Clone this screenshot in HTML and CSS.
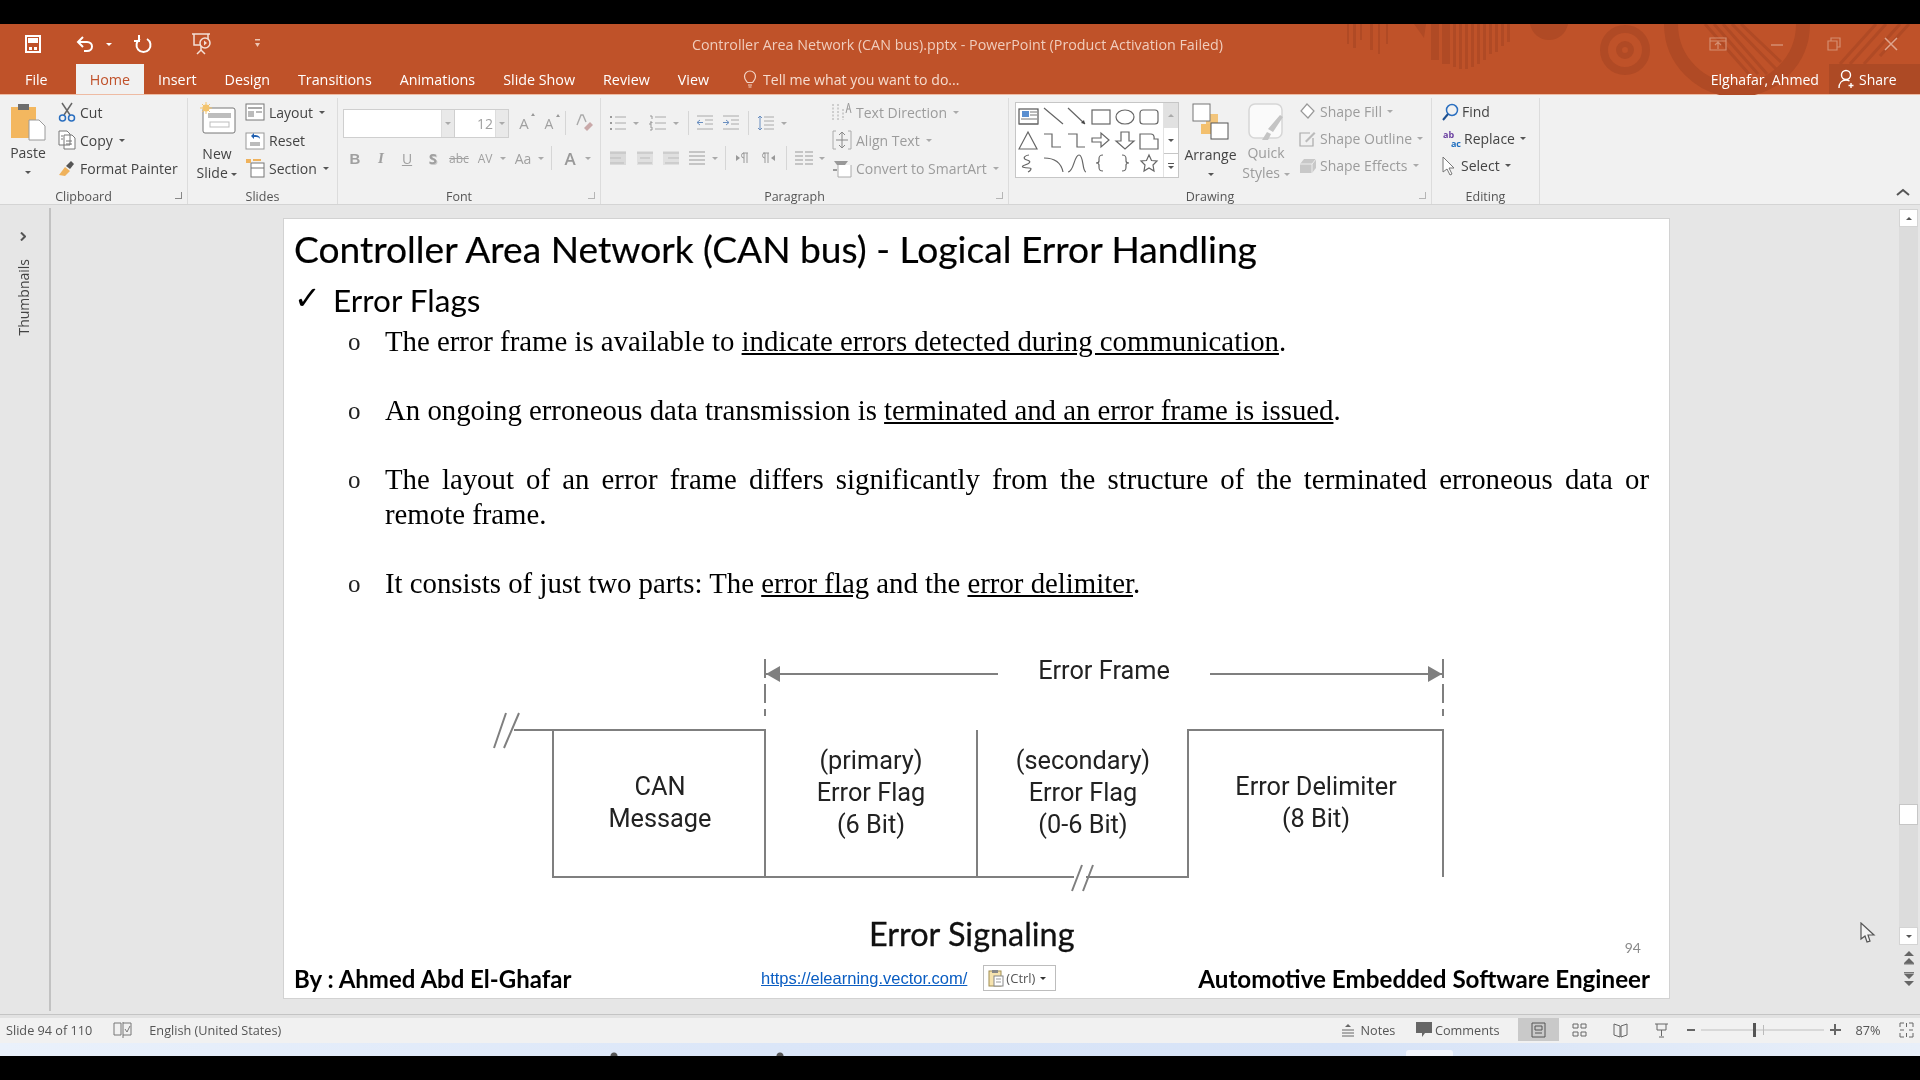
FILE: index.html
```html
<!DOCTYPE html>
<html lang="en">
<head>
    <meta charset="UTF-8">
    <title>Controller Area Network (CAN bus).pptx - PowerPoint</title>
    <link rel="stylesheet" href="styles.css">
</head>
<body>
<div class="screen">
    <div class="black-top"></div>

    <header class="header">
        <!-- office theme pattern behind the title bar -->
        <svg class="pattern" width="600" height="71" viewBox="0 0 600 71">
            <g fill="#b04a25">
                <rect x="27" y="0" width="2" height="20"/><rect x="33" y="0" width="3" height="24"/><rect x="40" y="0" width="2" height="16"/><rect x="50" y="0" width="3" height="26"/><rect x="58" y="0" width="2" height="30"/><rect x="66" y="0" width="2" height="20"/>
                <path d="M94 0h12l-2 14z"/>
                <rect x="111" y="0" width="8" height="36"/><rect x="122" y="0" width="8" height="40"/><rect x="133" y="0" width="3" height="43"/><rect x="139" y="0" width="3" height="45"/><rect x="145" y="0" width="3" height="45"/><rect x="151" y="0" width="3" height="43"/><rect x="157" y="0" width="3" height="40"/><rect x="163" y="0" width="3" height="36"/><rect x="169" y="0" width="3" height="30"/><rect x="175" y="0" width="3" height="28"/><rect x="181" y="0" width="3" height="22"/><rect x="187" y="0" width="3" height="18"/>
                <path d="M210 0h38c-2 10-10 16-19 16S212 10 210 0z"/>
            </g>
            <g fill="none" stroke="#b04a25">
                <circle cx="305" cy="26" r="21" stroke-width="8"/>
                <circle cx="305" cy="26" r="6" stroke-width="6"/>
                <circle cx="417" cy="0" r="66" stroke-width="14"/>
            </g>
            <g stroke="#b04a25" stroke-width="3">
                <path d="M385 0l44 50M394 0l44 50M403 0l44 50M412 0l44 45M421 0l40 38"/>
                <path d="M520 40L556 0M530 40L566 0M544 40L580 0M560 32L589 0"/>
            </g>
        </svg>

        <div class="titlebar">
            <div class="qat">
                <svg class="qat-save" width="18" height="18" viewBox="0 0 18 18"><path d="M2 1h14v16H2z" fill="none" stroke="#fff" stroke-width="2"/><rect x="4" y="3" width="10" height="5" fill="#fff"/><rect x="5" y="12" width="3" height="3" fill="#fff"/><rect x="10" y="12" width="3" height="3" fill="#fff"/></svg>
                <svg class="qat-undo" width="20" height="20" viewBox="0 0 20 20"><path d="M8 3L3 8l5 5M3 8h9c3 0 5 2 5 4.5s-2 4.5-5 4.5H9" fill="none" stroke="#fff" stroke-width="2"/></svg>
                <i class="caret caret-white qat-caret"></i>
                <svg class="qat-redo" width="20" height="20" viewBox="0 0 20 20"><path d="M7 5a7 7 0 1 0 7 0M6 1v6H1" fill="none" stroke="#fff" stroke-width="2"/></svg>
                <svg class="qat-show" width="22" height="24" viewBox="0 0 22 24"><path d="M1 2h18M3 2v11h14V2M10 13v5M6 22l4-4 4 4" fill="none" stroke="#f4e0d6" stroke-width="1.5"/><circle cx="14" cy="11" r="5" fill="#c0512a" stroke="#f4e0d6" stroke-width="1.5"/><path d="M13 8.5l3 2.500-3 2.500z" fill="#f4e0d6"/></svg>
                <svg class="qat-more" width="8" height="10" viewBox="0 0 8 10"><rect x="1" y="0" width="5" height="1.5" fill="#edc6b4"/><path d="M1 4h5L3.5 8z" fill="#edc6b4"/></svg>
            </div>
            <div class="doc-title">Controller Area Network (CAN bus).pptx - PowerPoint (Product Activation Failed)</div>
            <div class="win-btns">
                <svg width="18" height="16" viewBox="0 0 18 16"><path d="M1 2h16v12H1zM1 5h16M9 13V7M6 9l3-3 3 3" fill="none" stroke="#d58e70" stroke-width="1.2"/></svg>
                <svg width="14" height="16" viewBox="0 0 14 16"><path d="M1 9h12" stroke="#d58e70" stroke-width="1.5"/></svg>
                <svg width="14" height="14" viewBox="0 0 14 14"><path d="M1 4h9v9H1zM4 4V1h9v9h-3" fill="none" stroke="#d58e70" stroke-width="1.2"/></svg>
                <svg width="14" height="14" viewBox="0 0 14 14"><path d="M1 1l12 12M13 1L1 13" stroke="#e0a68e" stroke-width="1.5"/></svg>
            </div>
        </div>

        <nav class="tabs">
            <span class="tab tab-file">File</span>
            <span class="tab tab-active">Home</span>
            <span class="tab">Insert</span>
            <span class="tab">Design</span>
            <span class="tab">Transitions</span>
            <span class="tab">Animations</span>
            <span class="tab">Slide Show</span>
            <span class="tab">Review</span>
            <span class="tab">View</span>
            <span class="tell-me">
                <svg width="14" height="18" viewBox="0 0 14 18"><path d="M4.5 12.5C3 10.5 1.5 9.5 1.5 6.5a5.500 5.500 0 0 1 11 0c0 3-1.500 4-3 6zM5 15h4M5.500 17h3" fill="none" stroke="#f3d6c8" stroke-width="1.2"/></svg>
                Tell me what you want to do...
            </span>
            <span class="account">Elghafar, Ahmed</span>
            <span class="share">
                <svg width="18" height="20" viewBox="0 0 18 20"><circle cx="8" cy="6" r="4.5" fill="none" stroke="#fff" stroke-width="1.4"/><path d="M1 19c0-5 3-8 7-8 1.5 0 2.5.4 3.5 1M13 14v5M10.5 16.5h5" fill="none" stroke="#fff" stroke-width="1.4"/></svg>
                Share
            </span>
        </nav>
    </header>

    <section class="ribbon">
        <div class="group group-clipboard">
            <div class="group-body">
                <div class="big-btn big-paste">
                    <svg width="36" height="38" viewBox="0 0 36 38"><rect x="1" y="4" width="25" height="31" fill="#f3b75f"/><rect x="8" y="1" width="11" height="6" fill="#6d6d6d"/><path d="M19 17h10l6 6v14H19z" fill="#fff" stroke="#9a9a9a"/></svg>
                    <span class="big-label">Paste</span>
                    <i class="caret"></i>
                </div>
                <div class="stack">
                    <div class="row">
                        <svg width="18" height="20" viewBox="0 0 18 20"><path d="M4 1l8 12M14 1L6 13" stroke="#666" stroke-width="1.5"/><circle cx="4.5" cy="16" r="3" fill="none" stroke="#2a6fc0" stroke-width="1.5"/><circle cx="13.5" cy="16" r="3" fill="none" stroke="#2a6fc0" stroke-width="1.5"/></svg>
                        <span>Cut</span>
                    </div>
                    <div class="row">
                        <svg width="18" height="20" viewBox="0 0 18 20"><path d="M1 1h8l3 3v11H1zM6 5h8l3 3v11H6z" fill="#fff" stroke="#777"/><path d="M3 6h2M3 9h2M8 11h6M8 14h6" stroke="#777"/></svg>
                        <span>Copy</span><i class="caret caret-copy"></i>
                    </div>
                    <div class="row">
                        <svg width="18" height="20" viewBox="0 0 18 20"><path d="M1 17l6-8 5 4-5 5z" fill="#efb25c"/><path d="M8 8l5-5 3 3-4 5z" fill="#555"/></svg>
                        <span>Format Painter</span>
                    </div>
                </div>
            </div>
            <div class="group-label">Clipboard</div>
            <i class="launcher"></i>
        </div>

        <div class="group group-slides">
            <div class="group-body">
                <div class="big-btn big-new">
                    <svg width="36" height="32" viewBox="0 0 36 32"><rect x="3" y="6" width="32" height="25" rx="2" fill="#fff" stroke="#777"/><rect x="8" y="11" width="23" height="5" fill="#bdbdbd"/><rect x="10" y="20" width="19" height="5" fill="none" stroke="#bdbdbd"/><circle cx="6" cy="6" r="3.5" fill="#f3c46e"/><path d="M6 0v12M0 6h12M2 2l8 8M10 2l-8 8" stroke="#f3c46e"/></svg>
                    <span class="big-label big-new-text">New</span>
                    <span class="big-label big-new-second">Slide <i class="caret"></i></span>
                </div>
                <div class="stack stack-slides">
                    <div class="row">
                        <svg width="20" height="20" viewBox="0 0 20 20"><rect x="1" y="2" width="18" height="16" fill="#fff" stroke="#777"/><path d="M3 5h14v2H3z" fill="#aaa"/><path d="M3 9h6v6H3zM11 9h6v2h-6z" fill="#bbb"/></svg>
                        <span>Layout</span><i class="caret"></i>
                    </div>
                    <div class="row">
                        <svg width="20" height="20" viewBox="0 0 20 20"><rect x="1" y="3" width="18" height="16" fill="#fff" stroke="#999"/><path d="M5 12h10v4H5z" fill="#bbb"/><path d="M6 6l3-3v2c4 0 6 1 6 4-1-2-3-2-6-2v2z" fill="#1f5fb0"/></svg>
                        <span>Reset</span>
                    </div>
                    <div class="row">
                        <svg width="20" height="20" viewBox="0 0 20 20"><rect x="6" y="5" width="13" height="14" fill="#fff" stroke="#777"/><path d="M6 10h13" stroke="#777"/><rect x="1" y="1" width="5" height="4" fill="#efb25c"/><rect x="8" y="1" width="8" height="2" fill="#efb25c"/></svg>
                        <span>Section</span><i class="caret"></i>
                    </div>
                </div>
            </div>
            <div class="group-label">Slides</div>
        </div>

        <div class="group group-font">
            <div class="group-body tool-rows">
                <div class="tool-row tool-row-top">
                    <div class="combo combo-font"><i class="combo-arrow"><i class="caret caret-light"></i></i></div>
                    <div class="combo combo-size"><span class="combo-val">12</span><i class="combo-arrow"><i class="caret caret-light"></i></i></div>
                    <span class="tool tool-grow">A<i class="tiny-up"></i></span>
                    <span class="tool tool-shrink">A<i class="tiny-up"></i></span>
                    <i class="sep sep-a"></i>
                    <span class="tool">
                        <svg width="18" height="18" viewBox="0 0 18 18"><path d="M1 11L5 1h2l3 7" fill="none" stroke="#aaa" stroke-width="1.4"/><path d="M8 14l6-6 3 3-6 6z" fill="#c9a9a9"/></svg>
                    </span>
                </div>
                <div class="tool-row">
                    <span class="tool tool-b">B</span>
                    <span class="tool tool-i">I</span>
                    <span class="tool tool-u">U</span>
                    <span class="tool tool-s">S</span>
                    <span class="tool tool-abc">abc</span>
                    <span class="tool tool-av">AV</span><i class="caret caret-light caret-slot"></i>
                    <span class="tool tool-aa">Aa</span><i class="caret caret-light caret-slot"></i>
                    <i class="sep sep-b"></i>
                    <span class="tool tool-color">A</span><i class="caret caret-light caret-slot"></i>
                </div>
            </div>
            <div class="group-label">Font</div>
            <i class="launcher launcher-light"></i>
        </div>

        <div class="group group-para">
            <div class="group-body">
                <div class="tool-rows para-tools">
                    <div class="tool-row tool-row-top">
                        <span class="tool"><svg width="18" height="16" viewBox="0 0 18 16"><path d="M1 2h2M1 8h2M1 14h2" stroke="#999" stroke-width="2"/><path d="M6 2h11M6 8h11M6 14h11" stroke="#aaa"/></svg></span><i class="caret caret-light caret-slot"></i>
                        <span class="tool tool-gap"><svg width="18" height="16" viewBox="0 0 18 16"><path d="M1 1h2v3M1 7h2v1H1v2h2M1 12h2v3H1" fill="none" stroke="#999"/><path d="M6 2h11M6 8h11M6 14h11" stroke="#aaa"/></svg></span><i class="caret caret-light caret-slot"></i>
                        <i class="sep sep-c"></i>
                        <span class="tool"><svg width="18" height="16" viewBox="0 0 18 16"><path d="M1 1h16M9 5h8M9 9h8M1 14h16" stroke="#aaa"/><path d="M7 7.5H1M4 5L1 7.5 4 10" fill="none" stroke="#6a8fc0"/></svg></span>
                        <span class="tool"><svg width="18" height="16" viewBox="0 0 18 16"><path d="M1 1h16M9 5h8M9 9h8M1 14h16" stroke="#aaa"/><path d="M1 7.5h6M4 5l3 2.500L4 10" fill="none" stroke="#6a8fc0"/></svg></span>
                        <i class="sep sep-d"></i>
                        <span class="tool"><svg width="18" height="18" viewBox="0 0 18 18"><path d="M3 2v14M1 4l2-2 2 2M1 14l2 2 2-2" fill="none" stroke="#6a8fc0"/><path d="M7 3h10M7 7h10M7 11h10M7 15h10" stroke="#aaa"/></svg></span><i class="caret caret-light caret-slot"></i>
                    </div>
                    <div class="tool-row">
                        <span class="tool"><svg width="16" height="14" viewBox="0 0 16 14"><rect width="16" height="14" fill="#dadada"/><path d="M0 2h16M0 7h11M0 12h14" stroke="#bbb"/></svg></span>
                        <span class="tool tool-tight1"><svg width="16" height="14" viewBox="0 0 16 14"><rect width="16" height="14" fill="#e0e0e0"/><path d="M0 2h16M3 7h10M1 12h14" stroke="#bbb"/></svg></span>
                        <span class="tool"><svg width="16" height="14" viewBox="0 0 16 14"><rect width="16" height="14" fill="#e0e0e0"/><path d="M0 2h16M5 7h11M2 12h14" stroke="#bbb"/></svg></span>
                        <span class="tool"><svg width="16" height="14" viewBox="0 0 16 14"><path d="M0 1h16M0 5h16M0 9h16M0 13h16" stroke="#999"/></svg></span><i class="caret caret-light caret-slot"></i>
                        <i class="sep sep-e"></i>
                        <span class="tool"><svg width="14" height="12" viewBox="0 0 14 12"><path d="M1 3l4 3-4 3z" fill="#999"/><path d="M8 1h5M9 1v10M12 1v10M9 6a2.5 2.5 0 0 1 0-5" fill="none" stroke="#999"/></svg></span>
                        <span class="tool tool-tight1"><svg width="14" height="12" viewBox="0 0 14 12"><path d="M13 3L9 6l4 3z" fill="#999"/><path d="M1 1h6M3 1v10M6 1v10M3 6a2.5 2.5 0 0 1 0-5" fill="none" stroke="#999"/></svg></span>
                        <i class="sep sep-f"></i>
                        <span class="tool"><svg width="18" height="14" viewBox="0 0 18 14"><path d="M0 1h8M0 5h8M0 9h8M0 13h8M10 1h8M10 5h8M10 9h8M10 13h8" stroke="#999"/></svg></span><i class="caret caret-light caret-slot"></i>
                    </div>
                </div>
                <div class="stack stack-dim stack-para">
                    <div class="row">
                        <svg width="20" height="22" viewBox="0 0 20 22"><path d="M1 3v16M6 3v16M11 8v11" stroke="#aaa" stroke-dasharray="2 1.5"/><path d="M14 12l2.5-10L19 12M15 8h3" fill="none" stroke="#999"/></svg>
                        <span>Text Direction</span><i class="caret caret-light"></i>
                    </div>
                    <div class="row">
                        <svg width="20" height="20" viewBox="0 0 20 20"><path d="M4 1H1v18h3M16 1h3v18h-3" fill="none" stroke="#aaa"/><path d="M10 2v16M7 5l3-3 3 3M7 15l3 3 3-3M4 10h12" fill="none" stroke="#888"/></svg>
                        <span>Align Text</span><i class="caret caret-light"></i>
                    </div>
                    <div class="row">
                        <svg width="20" height="20" viewBox="0 0 20 20"><path d="M2 3h14l-3 4H5z" fill="#999"/><path d="M6 7v12h13V7" fill="#fff" stroke="#aaa"/><path d="M1 12h4" stroke="#999" stroke-width="2"/></svg>
                        <span>Convert to SmartArt</span><i class="caret caret-light"></i>
                    </div>
                </div>
            </div>
            <div class="group-label">Paragraph</div>
            <i class="launcher launcher-light"></i>
        </div>

        <div class="group group-draw">
            <div class="group-body">
                <div class="gallery">
                    <svg width="147" height="74" viewBox="0 0 147 74">
                        <g fill="none" stroke="#666" stroke-width="1.2">
                            <rect x="3" y="6" width="19" height="15" stroke="#555"/>
                            <path d="M28 5l19 16M52 5l17 16"/>
                            <rect x="76" y="7" width="18" height="14"/>
                            <ellipse cx="109" cy="14" rx="9" ry="7"/>
                            <rect x="124" y="7" width="18" height="14" rx="3"/>
                            <path d="M3 46l9-17 9 17z"/>
                            <path d="M28 31h8v13h9M52 31h9v13h8"/>
                            <path d="M76 35h9v-5l8 7-8 7v-5h-9z"/>
                            <path d="M105 29h8v9h5l-9 8-9-8h5z"/>
                            <path d="M124 31h11c4 0 3 5 3 5h4v10h-18z"/>
                            <path d="M13 52c-6 1-6 4-2 5s4 3-2 5 0 3 4 3 1 3-1 4"/>
                            <path d="M28 55c10 0 17 4 19 14"/>
                            <path d="M52 69c6 0 6-17 11-17s3 17 7 17"/>
                            <path d="M87 52c-4 0-4 2-4 4v2c0 2-3 2-3 2s3 0 3 2v2c0 2 0 4 4 4M106 52c4 0 4 2 4 4v2c0 2 3 2 3 2s-3 0-3 2v2c0 2 0 4-4 4"/>
                            <path d="M133 52l2.5 5.500 5.500.5-4 4 1 6-5-3-5 3 1-6-4-4 5.500-.5z"/>
                        </g>
                        <rect x="6" y="8" width="7" height="6" fill="#5b8fd0"/>
                        <path d="M14 9h7M14 12h7M5 16h16M3 21h19" stroke="#777"/>
                        <path d="M69 21l-4-1 3-3z" fill="#444"/>
                    </svg>
                    <div class="gallery-scroll">
                        <div class="gs-up"><i class="caret caret-light caret-flip"></i></div>
                        <div class="gs-down"><i class="caret"></i></div>
                        <div class="gs-more"><i class="gs-more-line"></i><i class="caret"></i></div>
                    </div>
                </div>
                <div class="big-btn big-arrange">
                    <svg width="38" height="37" viewBox="0 0 38 37"><rect x="14" y="11" width="12" height="12" fill="#f3c06e" opacity=".9"/><rect x="9" y="21" width="10" height="10" fill="#f3c06e"/><rect x="1" y="1" width="17" height="17" fill="#fff" stroke="#777"/><rect x="19" y="20" width="17" height="16" fill="#fff" stroke="#555"/></svg>
                    <span class="big-label">Arrange</span>
                    <i class="caret"></i>
                </div>
                <div class="big-btn big-quick">
                    <svg width="36" height="38" viewBox="0 0 36 38"><rect x="1" y="1" width="33" height="34" rx="6" fill="#fafafa" stroke="#d6d6d6" stroke-width="1.5"/><path d="M14 37l5-8 4 2-3 6zM20 26l12-14 3 2-10 15z" fill="#c4c4c4"/></svg>
                    <span class="big-label dim">Quick</span>
                    <span class="big-label dim">Styles <i class="caret caret-light"></i></span>
                </div>
                <div class="stack stack-dim stack-shape">
                    <div class="row row-shape">
                        <svg width="18" height="18" viewBox="0 0 18 18"><path d="M8 1l7 7-6 7-7-7z" fill="#fff" stroke="#999" stroke-width="1.2"/></svg>
                        <span>Shape Fill</span><i class="caret caret-light"></i>
                    </div>
                    <div class="row row-shape">
                        <svg width="18" height="18" viewBox="0 0 18 18"><path d="M11 3H1v13h13V8" fill="none" stroke="#aaa" stroke-width="1.2"/><path d="M6 11l9-9 1.5 1.5-9 9z" fill="#bbb"/></svg>
                        <span>Shape Outline</span><i class="caret caret-light"></i>
                    </div>
                    <div class="row row-shape">
                        <svg width="18" height="18" viewBox="0 0 18 18"><path d="M5 2h12v9l-4 5H1V7z" fill="#c8c8c8"/><path d="M1 7h12v9M13 7l4-5" fill="none" stroke="#eee"/></svg>
                        <span>Shape Effects</span><i class="caret caret-light"></i>
                    </div>
                </div>
            </div>
            <div class="group-label">Drawing</div>
            <i class="launcher launcher-light"></i>
        </div>

        <div class="group group-edit">
            <div class="group-body">
                <div class="stack stack-edit">
                    <div class="row row-shape">
                        <svg width="18" height="18" viewBox="0 0 18 18"><circle cx="11" cy="7" r="5.5" fill="none" stroke="#2a6fc0" stroke-width="1.5"/><path d="M7 11l-5 6" stroke="#1c4f90" stroke-width="2"/></svg>
                        <span>Find</span>
                    </div>
                    <div class="row row-shape">
                        <span class="ic-replace"><b class="ic-ab">ab</b><b class="ic-ac">ac</b></span>
                        <span>Replace</span><i class="caret caret-replace"></i>
                    </div>
                    <div class="row row-shape">
                        <svg width="14" height="20" viewBox="0 0 14 20"><path d="M2 1v15l4-3 3 6 2-1-3-6h5z" fill="#fff" stroke="#777"/></svg>
                        <span class="select-text">Select</span><i class="caret"></i>
                    </div>
                </div>
            </div>
            <div class="group-label">Editing</div>
        </div>

        <svg class="collapse" width="14" height="8" viewBox="0 0 14 8"><path d="M1 7l6-5 6 5" fill="none" stroke="#555" stroke-width="2"/></svg>
    </section>

    <main class="work">
        <aside class="thumbs">
            <svg width="6" height="9" viewBox="0 0 6 9"><path d="M1 0.5l4 4-4 4" fill="none" stroke="#555" stroke-width="2"/></svg>
            <span class="thumbs-label">Thumbnails</span>
        </aside>

        <div class="stage">
            <article class="slide">
                <h1 class="slide-title">Controller Area Network (CAN bus) - Logical Error Handling</h1>
                <h2 class="slide-sub"><span class="tick">&#10003;</span>Error Flags</h2>
                <ul class="points">
                    <li>The error frame is available to <u>indicate errors detected during communication</u>.</li>
                    <li>An ongoing erroneous data transmission is <u>terminated and an error frame is issued</u>.</li>
                    <li class="justified">The layout of an error frame differs significantly from the structure of the terminated erroneous data or remote frame.</li>
                    <li>It consists of just two parts: The <u>error flag</u> and the <u>error delimiter</u>.</li>
                </ul>

                <svg class="diagram" width="1385" height="272" viewBox="0 0 1385 272">
                    <g fill="none" stroke="#7f7f7f" stroke-width="2">
                        <path d="M230 89H481V236M269 89V236H904V89H1159V236M693 89V236"/>
                        <path d="M210 107l12-35M220 107l15-35"/>
                        <path d="M481 18V75M1159 18V75" stroke-dasharray="19 6"/>
                        <path d="M481 33H714M926 33H1159"/>
                    </g>
                    <rect x="790" y="230" width="12" height="12" fill="#fff"/>
                    <path d="M788 250l10-26M799 250l10-26" fill="none" stroke="#7f7f7f" stroke-width="2"/>
                    <path d="M482 33l14-8v16zM1158 33l-14-8v16z" fill="#7f7f7f"/>
                    <g class="diagram-text">
                        <text x="820" y="38">Error Frame</text>
                        <text x="376" y="153.5">CAN</text>
                        <text x="376" y="185.5">Message</text>
                        <text x="587" y="127.5">(primary)</text>
                        <text x="587" y="159.5">Error Flag</text>
                        <text x="587" y="191.5">(6 Bit)</text>
                        <text x="799" y="127.5">(secondary)</text>
                        <text x="799" y="159.5">Error Flag</text>
                        <text x="799" y="191.5">(0-6 Bit)</text>
                        <text x="1032" y="153.5">Error Delimiter</text>
                        <text x="1032" y="185.5">(8 Bit)</text>
                    </g>
                </svg>

                <div class="caption-row">
                    <span class="caption">Error Signaling</span>
                    <span class="page-num">94</span>
                </div>
                <footer class="slide-foot">
                    <b class="foot-by">By : Ahmed Abd El-Ghafar</b>
                    <a class="foot-link" href="#">https://elearning.vector.com/</a>
                    <span class="paste-opt">
                        <svg width="16" height="18" viewBox="0 0 16 18"><rect x="1" y="2" width="12" height="15" fill="#f6e3ae" stroke="#a08d50"/><rect x="4" y="1" width="6" height="3" fill="#888"/><rect x="6" y="7" width="9" height="10" fill="#fff" stroke="#888"/><path d="M8 10h5M8 13h5" stroke="#999"/></svg>
                        (Ctrl)<i class="caret caret-dark"></i>
                    </span>
                    <b class="foot-role">Automotive Embedded Software Engineer</b>
                </footer>
            </article>

            <svg class="cursor" width="16" height="22" viewBox="0 0 16 22"><path d="M1 1v16l4-3 2 6 3-1-2-6h6z" fill="#f2f2f2" stroke="#555" stroke-width="1.2"/></svg>
        </div>

        <div class="scrollbar">
            <div class="sb-btn"><i class="caret caret-flip"></i></div>
            <div class="sb-track">
                <div class="sb-thumb"></div>
            </div>
            <div class="sb-btn"><i class="caret"></i></div>
            <svg class="sb-page" width="10" height="14" viewBox="0 0 10 14"><path d="M5 0l5 5H0zM5 7l5 5H0z" fill="#666"/><rect x="0" y="12" width="10" height="1.5" fill="#777"/></svg>
            <svg class="sb-page" width="10" height="14" viewBox="0 0 10 14"><rect x="0" y="0" width="10" height="1.5" fill="#777"/><path d="M0 2h10L5 7zM0 9h10l-5 5z" fill="#666"/></svg>
        </div>
    </main>

    <footer class="status">
        <span class="st-slide">Slide 94 of 110</span>
        <svg class="st-proof" width="20" height="16" viewBox="0 0 20 16"><path d="M1 1h7v12H1zM10 1h8v12h-8" fill="none" stroke="#777"/><path d="M10 0v16M12 7l2 3 3-6" fill="none" stroke="#777"/></svg>
        <span class="st-lang">English (United States)</span>
        <div class="st-right">
            <svg width="14" height="14" viewBox="0 0 14 14"><path d="M7 1l3 3H4z" fill="#666"/><path d="M1 7h12M1 10h12M1 13h12" stroke="#666"/></svg>
            <span class="st-notes">Notes</span>
            <svg class="st-comment" width="17" height="16" viewBox="0 0 17 16"><path d="M0 0h16v11H9l-3 4v-4H0z" fill="#666"/></svg>
            <span class="st-comments">Comments</span>
            <span class="view view-active"><svg width="15" height="16" viewBox="0 0 15 16"><path d="M1 1h13v14H1zM4 4h7v4H4zM4 11h7" fill="none" stroke="#555"/></svg></span>
            <span class="view"><svg width="15" height="14" viewBox="0 0 15 14"><path d="M1 1h5v4H1zM9 1h5v4H9zM1 9h5v4H1zM9 9h5v4H9z" fill="none" stroke="#666"/></svg></span>
            <span class="view"><svg width="15" height="16" viewBox="0 0 15 16"><path d="M1 2l6 2v11l-6-2zM14 2L8 4v11l6-2z" fill="none" stroke="#666"/></svg></span>
            <span class="view"><svg width="15" height="16" viewBox="0 0 15 16"><path d="M1 2h13M3 2v6h9V2M7.5 8v6M5 15h5" fill="none" stroke="#666"/></svg></span>
            <span class="zoom-minus"></span>
            <span class="zoom-slider"><i class="zoom-mid"></i><i class="zoom-thumb"></i></span>
            <span class="zoom-plus"></span>
            <span class="zoom-val">87%</span>
            <svg class="st-fit" width="15" height="16" viewBox="0 0 15 16"><path d="M1 5V1h4M10 1h4v4M14 11v4h-4M5 15H1v-4M1 8h4M10 8h4M7.5 1v4M7.5 11v4" fill="none" stroke="#666"/></svg>
        </div>
    </footer>

    <div class="desktop-strip"><i class="strip-tab"></i></div>
    <div class="black-bottom"></div>
</div>
</body>
</html>
```

FILE: styles.css
```css
* {
    box-sizing: border-box;
}
body {
    margin: 0;
    background: #000;
    font-family: 'Open Sans', sans-serif;
    font-size: 14px;
    color: #444;
}
i {
    font-style: normal;
}
.screen {
    width: 1920px;
    height: 1080px;
    display: flex;
    flex-direction: column;
    overflow: hidden;
    filter: blur(0.35px);
}
.black-top {
    height: 24px;
    background: #000;
}
.black-bottom {
    height: 24px;
    background: #000;
}

/* title bar + tabs */
.header {
    position: relative;
    height: 71px;
    background: #bf5229;
    border-bottom: 1px solid #eebba3;
    color: #fff;
}
.pattern {
    position: absolute;
    right: 0;
    top: 0;
}
.titlebar {
    position: relative;
    height: 40px;
    display: grid;
    grid-template-columns: 1fr auto 1fr;
    align-items: center;
}
.qat {
    display: flex;
    align-items: center;
    padding-left: 24px;
}
.qat-undo {
    margin-left: 33px;
}
.qat-caret {
    margin-left: 11px;
}
.qat-redo {
    margin-left: 21px;
}
.qat-show {
    margin-left: 38px;
}
.qat-more {
    margin-left: 41px;
}
.doc-title {
    color: #f0cdbd;
    font-size: 14.3px;
    padding-right: 5px;
}
.win-btns {
    display: flex;
    align-items: center;
    justify-content: flex-end;
    gap: 43px;
    padding-right: 22px;
}
.tabs {
    position: relative;
    height: 30px;
    display: flex;
    align-items: stretch;
    font-size: 14.3px;
}
.tab {
    padding: 0 14px;
    display: flex;
    align-items: center;
}
.tab-file {
    margin-left: 11px;
    margin-right: 14px;
}
.tab-active {
    background: #f1f1f1;
    color: #c0512a;
}
.tell-me {
    margin-left: 20px;
    display: flex;
    align-items: center;
    gap: 6px;
    color: #f6dccf;
    font-size: 14.1px;
}
.account {
    margin-left: auto;
    display: flex;
    align-items: center;
    font-size: 14.1px;
    padding-right: 10px;
}
.share {
    width: 91px;
    background: #ad4a25;
    display: flex;
    align-items: center;
    gap: 3px;
    padding-left: 9px;
    font-size: 14px;
}

/* ribbon */
.ribbon {
    height: 110px;
    background: #f1f1f1;
    border-bottom: 1px solid #d4d4d4;
    display: flex;
    padding-top: 3px;
    white-space: nowrap;
}
.group {
    position: relative;
    display: flex;
    flex-direction: column;
    border-right: 1px solid #dcdcdc;
}
.group-clipboard { width: 188px; }
.group-slides { width: 150px; }
.group-font { width: 263px; }
.group-para { width: 408px; }
.group-draw { width: 423px; }
.group-edit { width: 108px; }
.group-body {
    height: 93px;
    display: flex;
}
.group-label {
    height: 14px;
    line-height: 14px;
    text-align: center;
    font-size: 12.5px;
    color: #555;
}
.group-clipboard .group-label,
.group-font .group-label,
.group-para .group-label,
.group-draw .group-label {
    padding-right: 20px;
}
.launcher {
    position: absolute;
    right: 5px;
    bottom: 5px;
    width: 7px;
    height: 7px;
    border-left: 1px solid #888;
    border-top: 1px solid #888;
    transform: rotate(180deg);
}
.launcher-light {
    border-color: #b5b5b5;
}
.caret {
    display: inline-block;
    width: 0;
    height: 0;
    border-left: 3px solid transparent;
    border-right: 3px solid transparent;
    border-top: 3px solid #555;
    vertical-align: middle;
}
.caret-white {
    border-top-color: #fff;
}
.caret-light {
    border-top-color: #aaa;
}
.caret-dark {
    border-top-color: #333;
    margin-left: 3px;
}
.caret-flip {
    transform: rotate(180deg);
}
.row .caret-copy {
    margin-left: 11px;
}
.row .caret-replace {
    margin-left: 9px;
}
.caret-slot {
    flex: none;
    margin: 0 2px;
}
.big-btn {
    display: flex;
    flex-direction: column;
    align-items: center;
}
.big-label {
    line-height: 20px;
}
.big-paste {
    width: 56px;
    padding-top: 5px;
}
.big-paste .big-label {
    margin-top: 2px;
}
.big-paste .caret {
    margin-top: 8px;
}
.big-new {
    width: 44px;
    margin-left: 7px;
    padding-top: 4px;
}
.big-new svg {
    margin-left: 2px;
}
.big-new-text {
    margin-top: 10px;
}
.big-new-second {
    margin-top: -1px;
}
.stack {
    display: flex;
    flex-direction: column;
    margin-left: 2px;
}
.stack-slides {
    margin-left: 6px;
}
.stack-dim {
    color: #9c9c9c;
}
.row {
    height: 28px;
    display: flex;
    align-items: center;
    gap: 4px;
}
.row svg {
    flex: none;
}
.row .caret {
    margin-left: 2px;
}
.row-shape {
    height: 27px;
    gap: 3px;
}
.stack-para {
    margin-left: 4px;
}

/* font + paragraph tool rows */
.tool-rows {
    display: flex;
    flex-direction: column;
    padding-left: 4px;
}
.para-tools {
    width: 227px;
}
.tool-row {
    display: flex;
    align-items: center;
    height: 32px;
}
.tool-row-top {
    margin-top: 10px;
    margin-bottom: 4px;
    height: 30px;
}
.tool {
    position: relative;
    flex: none;
    width: 26px;
    text-align: center;
    color: #a0a0a0;
    display: flex;
    align-items: center;
    justify-content: center;
}
.tool-gap {
    margin-left: 4px;
}
.tool-tight1 {
    margin-left: 1px;
}
.combo {
    height: 29px;
    background: #fff;
    border: 1px solid #cfcfcf;
    display: flex;
    justify-content: flex-end;
    align-items: stretch;
}
.combo-font {
    width: 112px;
    margin-left: 1px;
}
.combo-size {
    width: 54px;
    border-left: 0;
}
.combo-val {
    display: flex;
    align-items: center;
    padding-right: 2px;
    color: #a0a0a0;
}
.combo-arrow {
    width: 13px;
    background: #e9e9e9;
    border-left: 1px solid #ddd;
    display: flex;
    align-items: center;
    justify-content: center;
}
.tool-grow {
    margin-left: 2px;
    font-size: 15px;
}
.tool-shrink {
    margin-left: -1px;
}
.tiny-up {
    position: absolute;
    right: 2px;
    top: 0;
    width: 0;
    height: 0;
    border-left: 2px solid transparent;
    border-right: 2px solid transparent;
    border-bottom: 3px solid #999;
}
.sep {
    flex: none;
    width: 1px;
    height: 24px;
    background: #d6d6d6;
}
.sep-a { margin: 0 6px 0 3px; }
.sep-b { margin: 0 5px; }
.sep-c { margin: 0 3px 0 7px; }
.sep-d { margin: 0 4px; }
.sep-e { margin: 0 3px 0 5px; }
.sep-f { margin: 0 4px; }
.tool-b { font-weight: 700; font-size: 15px; font-family: 'Liberation Sans', sans-serif; }
.tool-i { font-style: italic; font-size: 15px; font-family: 'Liberation Serif', serif; font-weight: 700; }
.tool-u { text-decoration: underline; }
.tool-s { font-weight: 700; font-size: 15px; text-shadow: 1px 1px 0 #ccc; }
.tool-abc { text-decoration: line-through; font-size: 12px; }
.tool-av { font-size: 12px; }
.tool-aa { margin-left: 2px; }
.tool-color { font-size: 17px; color: #999; font-weight: 600; }

/* shape gallery */
.gallery {
    width: 164px;
    height: 76px;
    margin: 4px 0 0 6px;
    background: #fff;
    border: 1px solid #c6c6c6;
    display: flex;
    flex: none;
}
.gallery svg {
    flex: none;
}
.gallery-scroll {
    flex: 1;
    display: flex;
    flex-direction: column;
    border-left: 1px solid #e2e2e2;
}
.gs-up {
    height: 25px;
    background: #e1e1e1;
    display: flex;
    align-items: center;
    justify-content: center;
}
.gs-down {
    height: 25px;
    display: flex;
    align-items: center;
    justify-content: center;
}
.gs-more {
    flex: 1;
    border-top: 1px solid #c6c6c6;
    display: flex;
    flex-direction: column;
    align-items: center;
    justify-content: center;
    gap: 2px;
}
.gs-more-line {
    width: 6px;
    height: 1px;
    background: #555;
}
.big-arrange {
    width: 51px;
    margin-left: 6px;
    padding-top: 5px;
}
.big-arrange .big-label {
    margin-top: 5px;
}
.big-arrange .caret {
    margin-top: 8px;
}
.big-quick {
    width: 52px;
    margin-left: 4px;
    padding-top: 5px;
}
.big-quick svg {
    margin-bottom: 2px;
}
.dim {
    color: #9c9c9c;
}
.stack-shape {
    margin-left: 7px;
}
.stack-edit {
    margin-left: 9px;
}
.group-edit .row {
    color: #444;
}
.select-text {
    margin-left: 3px;
}
.ic-replace {
    position: relative;
    flex: none;
    width: 20px;
    height: 18px;
    font-size: 9px;
    line-height: 9px;
}
.ic-ab {
    position: absolute;
    left: 2px;
    top: 0;
    color: #6a3fa0;
}
.ic-ac {
    position: absolute;
    right: 0;
    bottom: 0;
    color: #1f6fc0;
}
.collapse {
    margin-left: auto;
    margin-right: 10px;
    margin-top: 90px;
}

/* workspace */
.work {
    height: 810px;
    background: #e6e6e6;
    display: flex;
    border-bottom: 1px solid #c4c4c4;
}
.thumbs {
    width: 51px;
    margin: 3px 0;
    border-right: 2px solid #c2c2c2;
    display: flex;
    flex-direction: column;
    align-items: center;
    padding: 24px 3px 0 0;
    color: #444;
}
.thumbs-label {
    writing-mode: vertical-rl;
    transform: rotate(180deg);
    margin-top: 18px;
    font-size: 14px;
}
.stage {
    position: relative;
    flex: 1;
    padding: 13px 0 0 232px;
}
.cursor {
    position: absolute;
    left: 1809px;
    top: 717px;
}
.slide {
    width: 1387px;
    height: 781px;
    background: #fff;
    border: 1px solid #d2d2d2;
    color: #000;
    font-family: 'Lato', sans-serif;
}
.slide-title {
    margin: 0;
    padding: 6px 0 0 10px;
    font-size: 37.15px;
    line-height: 48px;
    font-weight: 400;
    -webkit-text-stroke: 0.2px #000;
}
.slide-sub {
    margin: 7px 0 0 10px;
    font-size: 31.5px;
    line-height: 40px;
    font-weight: 400;
}
.tick {
    display: inline-block;
    width: 39px;
    font-family: 'DejaVu Sans', sans-serif;
    font-size: 32px;
    line-height: 30px;
    position: relative;
    top: -3px;
}
.points {
    list-style: none;
    margin: 4px 0 0;
    padding: 0 20px 0 101px;
    font-family: 'Liberation Serif', serif;
    font-size: 28.8px;
    line-height: 35px;
}
.points li {
    position: relative;
    margin-bottom: 34px;
}
.points li::before {
    content: "o";
    position: absolute;
    left: -37px;
    font-size: 25px;
    color: #222;
}
.justified {
    text-align: justify;
}
/* collapses with the last li's 34px margin */
.diagram {
    display: block;
    margin-top: 40px;
}
.diagram-text text {
    font-family: 'Roboto', sans-serif;
    font-size: 25.3px;
    text-anchor: middle;
    fill: #222;
}
.caption-row {
    display: flex;
    align-items: center;
    height: 48px;
    padding: 0 28px 8px 585px;
}
.caption {
    font-size: 32.4px;
    color: #111;
    -webkit-text-stroke: 0.3px #111;
}
.page-num {
    margin-left: auto;
    align-self: flex-end;
    margin-bottom: -3px;
    font-size: 14px;
    color: #8a8a8a;
}
.slide-foot {
    display: flex;
    align-items: center;
    height: 34px;
    padding: 0 19px 0 10px;
}
.foot-by {
    width: 467px;
    font-size: 24px;
}
.foot-link {
    color: #0a5dc2;
    font-family: 'Liberation Sans', sans-serif;
    font-size: 16.5px;
}
.paste-opt {
    margin-left: 16px;
    width: 73px;
    height: 26px;
    border: 1px solid #bdbdbd;
    display: flex;
    align-items: center;
    gap: 2px;
    padding-left: 4px;
    font-family: 'Open Sans', sans-serif;
    font-size: 13px;
    color: #555;
}
.foot-role {
    margin-left: auto;
    font-size: 24.2px;
}

/* scrollbar */
.scrollbar {
    width: 21px;
    padding: 4px 2px 0 0;
    display: flex;
    flex-direction: column;
    align-items: center;
    flex: none;
}
.sb-btn {
    width: 19px;
    height: 18px;
    background: #fff;
    border: 1px solid #d4d4d4;
    display: flex;
    align-items: center;
    justify-content: center;
    flex: none;
}
.sb-track {
    width: 19px;
    height: 700px;
    background: #dcdcdc;
    padding-top: 577px;
    flex: none;
}
.sb-thumb {
    height: 21px;
    background: #fff;
    border: 1px solid #c6c6c6;
}
.sb-page {
    margin-top: 6px;
    flex: none;
}
.sb-page + .sb-page {
    margin-top: 7px;
}

/* status bar */
.status {
    height: 28px;
    background: #f1f1f1;
    border-top: 3px solid #e2e2e2;
    display: flex;
    align-items: center;
    padding: 0 0 2px 6px;
    font-size: 12.7px;
    color: #555;
    white-space: nowrap;
}
.st-proof {
    margin-left: 21px;
}
.st-lang {
    margin-left: 16px;
}
.st-right {
    margin-left: auto;
    display: flex;
    align-items: center;
    height: 100%;
}
.st-notes {
    margin-left: 6px;
}
.st-comment {
    margin-left: 21px;
}
.st-comments {
    margin-left: 1.5px;
    margin-right: 18px;
}
.view {
    width: 41px;
    height: 100%;
    display: flex;
    align-items: center;
    justify-content: center;
}
.view-active {
    background: #c9c9c9;
}
.zoom-minus {
    width: 8px;
    height: 2px;
    background: #666;
    margin-left: 5.5px;
}
.zoom-slider {
    position: relative;
    width: 122.5px;
    height: 2px;
    background: #d8d8d8;
    margin: 0 6px;
}
.zoom-mid {
    position: absolute;
    left: 62px;
    top: -4px;
    width: 1px;
    height: 10px;
    background: #bbb;
}
.zoom-thumb {
    position: absolute;
    left: 52px;
    top: -6px;
    width: 3px;
    height: 14px;
    background: #555;
}
.zoom-plus {
    position: relative;
    width: 11px;
    height: 2px;
    background: #666;
}
.zoom-plus::after {
    content: "";
    position: absolute;
    left: 4.5px;
    top: -4.5px;
    width: 2px;
    height: 11px;
    background: #666;
}
.zoom-val {
    margin-left: 15px;
}
.st-fit {
    margin: 0 6px 0 18.5px;
}
.desktop-strip {
    height: 13px;
    background:
        radial-gradient(circle at 614px 13px, #555 0, #555 3px, transparent 4px),
        radial-gradient(circle at 780px 13px, #555 0, #555 3px, transparent 4px),
        linear-gradient(90deg, #eaf1fb, #dbe6f8 40%, #d7e3f7 70%, #e8eff9);
    display: flex;
    justify-content: flex-end;
    align-items: flex-end;
}
.strip-tab {
    width: 47px;
    height: 6px;
    margin-right: 467px;
    background: #f2f5fb;
    border-radius: 3px 3px 0 0;
}
```
